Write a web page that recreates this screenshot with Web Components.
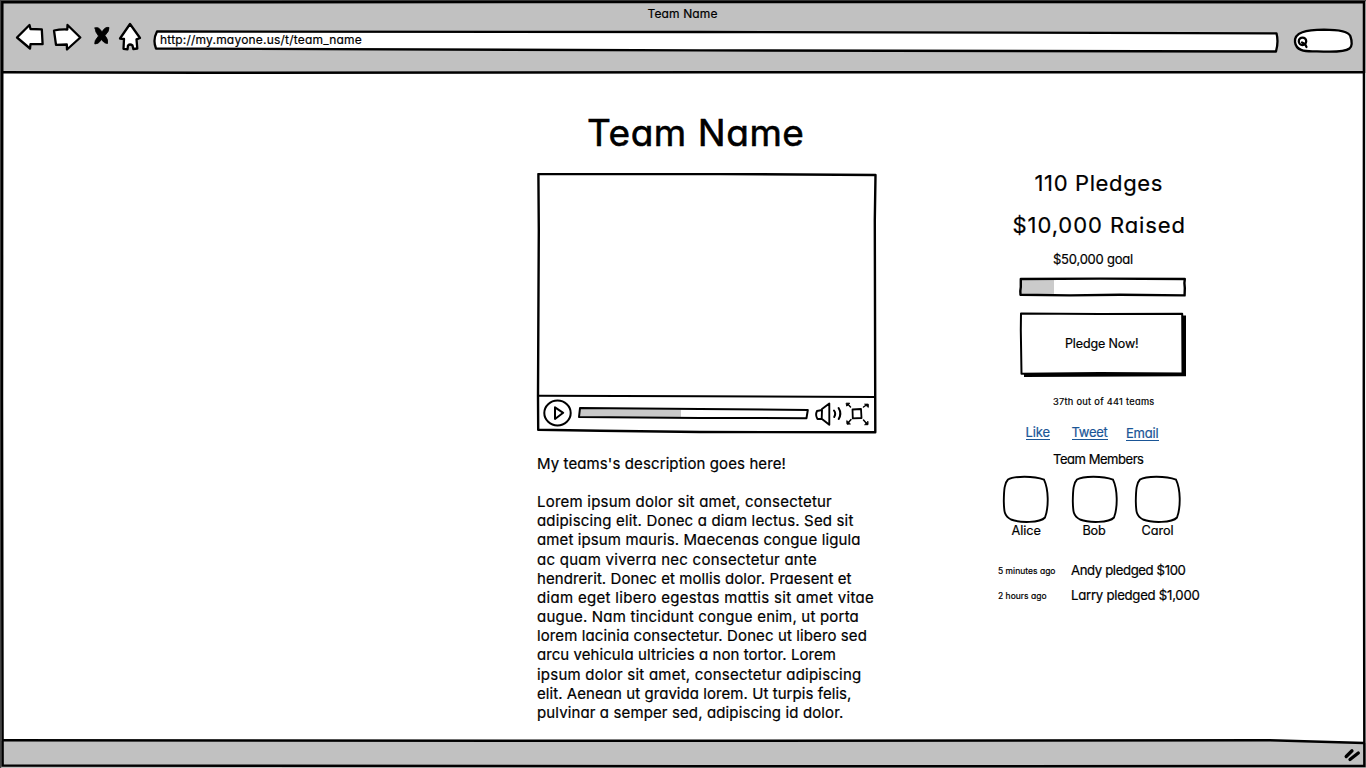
<!DOCTYPE html>
<html lang="en">
<head>
<meta charset="utf-8">
<title>Team Name</title>
<style>
html,body{margin:0;padding:0;background:#fff;overflow:hidden}
body{font-family:Inter,"Open Sans",sans-serif;color:#000}
</style>
</head>
<body>
<team-page></team-page>
<script>
const define = (name, html, ready) => {
  const t = document.createElement('template');
  t.innerHTML = html;
  customElements.define(name, class extends HTMLElement {
    constructor(){ super(); this.attachShadow({mode:'open'}).append(t.content.cloneNode(true)); }
    connectedCallback(){ if (ready) ready(this, this.shadowRoot); }
  });
};

/* One line of lettering: s = font size, w = line width, h = line box, x = indent */
define('sk-text', `<style>
:host{display:block;flex:none;white-space:pre;font-feature-settings:"cv11","calt" 0;font-weight:400;text-align:left;-webkit-text-stroke:.2px currentColor}
span{display:inline-block;line-height:inherit}
:host([u]) span{line-height:14px;border-bottom:1px solid #1a5596}
</style><span><slot></slot></span>`, (el, root) => {
  const s = +el.getAttribute('s'), w = +el.getAttribute('w'), h = el.getAttribute('h');
  el.style.fontSize = s + 'px';
  el.style.lineHeight = h + 'px';
  el.style.height = h + 'px';
  el.style.width = w + 'px';
  if (el.hasAttribute('x')) el.style.marginLeft = el.getAttribute('x') + 'px';
  const span = root.querySelector('span');
  const n = el.textContent.length;
  const k = (w - span.getBoundingClientRect().width) / n;
  span.style.letterSpacing = k.toFixed(3) + 'px';
});

define('nav-icons', `<style>:host{display:block;flex:none;width:130px;height:32px}svg{display:block}</style>
<svg width="130" height="32" viewBox="14 21 130 32" fill="#fff" stroke="#000" stroke-width="2.3" stroke-linejoin="round" stroke-linecap="round">
<path d="M17 37.5L29.5 25L30.5 29L41.8 29.4L42.6 44L30.5 44.2L30 48.5Z"/>
<path d="M54 30.5Q60 29.2 67.3 29.5L67.5 25L80.3 37.5L67 49.5L66.8 44.5L56 44.8Z"/>
<path d="M130 24L140 38L136.5 39.3L137.3 48.5L133.3 49L132.5 45.5Q130 43.5 128 45.5L127.5 49.3L123.5 48.8L124 39L120 38.5Z"/>
<path d="M95 28Q98.500 26 102 32Q105 26.500 109 27.500Q109.500 31 105 35.500Q108.500 39.500 107.500 43.500Q105 44 101.500 39.800Q98 44.500 94.800 44Q94 41 98.500 36Q95 32 95 28Z" fill="#000" stroke-width=".8"/>
</svg>`);

define('address-bar', `<style>:host{display:grid;flex:none;width:1128px;height:26px;align-items:center}
svg,sk-text{grid-area:1/1}</style>
<svg width="1128" height="26" viewBox="152 28 1128 26"><path d="M157 31.5L700 32L1276.5 33.3Q1278.7 42 1276 51.5L700 50.4L156 48.5Q152.5 40 157 31.5Z" fill="#fff" stroke="#000" stroke-width="2.3" stroke-linejoin="round"/></svg>
<sk-text s="12" w="202" h="23" x="8" style="align-self:start">http://my.mayone.us/t/team_name</sk-text>`);

define('search-pill', `<style>:host{display:block;flex:none;width:62px;height:28px}svg{display:block}</style>
<svg width="62" height="28" viewBox="1292 27 62 28" fill="#fff" stroke="#000" stroke-width="2.3" stroke-linejoin="round" stroke-linecap="round">
<path d="M1295 42C1294 32 1306 30 1324 29.7C1337 29.8 1348 31 1350.3 36C1352.5 42 1352 47 1349.5 48.5C1345 52 1330 52 1317 51.3C1303 52 1296 50 1295 42Z"/>
<circle cx="1302.5" cy="41.3" r="3.7"/><path d="M1302 42.5L1305 44L1306.500 47" stroke-width="2.2" fill="none"/></svg>`);

define('browser-bar', `<style>
:host{display:flex;flex-direction:column;height:73px;background:#c1c1c1;flex:none}
.row{display:flex;height:36px}
.row>*{align-self:flex-start}
nav-icons{margin:-6px 0 0 14px}
address-bar{margin:1px 0 0 8px}
search-pill{margin:0 0 0 12px}
</style><sk-text s="12" w="70" h="27" x="647.5">Team Name</sk-text>
<div class="row"><nav-icons></nav-icons><address-bar></address-bar><search-pill></search-pill></div>`);

define('video-player', `<style>:host{display:block;width:341px;height:261px;flex:none}svg{display:block}</style>
<svg width="341" height="261" viewBox="536 173 341 261" fill="none" stroke="#000" stroke-width="2" stroke-linejoin="round" stroke-linecap="round">
<path d="M538.4 174L720 174L875.5 175L874.8 220L875.3 432.3L700 432L600 430.8L538.2 429.8L538 396L538.5 290L538.8 230Z" stroke-width="2.4"/>
<path d="M539 395.8L700 396.2L875 397"/>
<ellipse cx="557.5" cy="413" rx="13.2" ry="12.4"/>
<path d="M555 407.3L563.2 412.8L555 419Z"/>
<path d="M580 408.5L681 409.5V417.6L579.5 417Z" fill="#c8c8c8" stroke="none"/>
<path d="M580 408L700 409L807.8 410L806.5 418.2L700 418L579 417Z"/>
<path d="M817 411L822 410L821.7 419L817.5 419Q815 415 817 411ZM822 409L829.3 403.5V424.8L822 419" stroke-width="1.9"/>
<path d="M834 410.5Q836.3 413.5 834.2 417M838.6 408Q842 413.5 838.7 419"/>
<path d="M852.5 409.5L861 409L861.5 418L852.8 418.4Z" stroke-width="1.8"/>
<path d="M850.5 407L848 404.3M863.500 407L867 404.500M851 419.5L848 423M863.5 420L867 424" stroke-width="1.5"/>
<path d="M846.500 403.200h3.200l-2.700 2.700ZM865 404.200h3.300v2.800ZM846.800 421l.2 3.200 3-.2ZM868 421.700v3h-3Z" fill="#000" stroke-width="1"/>
</svg>`);

define('team-story', `<style>:host{display:block}.gap{height:19.1px}</style>
<sk-text s="15" w="249" h="19.2">My teams's description goes here!</sk-text>
<div class="gap"></div>
<sk-text s="15" w="295" h="19.2">Lorem ipsum dolor sit amet, consectetur</sk-text>
<sk-text s="15" w="316.500" h="19.2">adipiscing elit. Donec a diam lectus. Sed sit</sk-text>
<sk-text s="15" w="323.500" h="19.2">amet ipsum mauris. Maecenas congue ligula</sk-text>
<sk-text s="15" w="280" h="19.2">ac quam viverra nec consectetur ante</sk-text>
<sk-text s="15" w="314.500" h="19.2">hendrerit. Donec et mollis dolor. Praesent et</sk-text>
<sk-text s="15" w="337" h="19.2">diam eget libero egestas mattis sit amet vitae</sk-text>
<sk-text s="15" w="322" h="19.2">augue. Nam tincidunt congue enim, ut porta</sk-text>
<sk-text s="15" w="330" h="19.2">lorem lacinia consectetur. Donec ut libero sed</sk-text>
<sk-text s="15" w="299" h="19.2">arcu vehicula ultricies a non tortor. Lorem</sk-text>
<sk-text s="15" w="324.500" h="19.2">ipsum dolor sit amet, consectetur adipiscing</sk-text>
<sk-text s="15" w="314.500" h="19.2">elit. Aenean ut gravida lorem. Ut turpis felis,</sk-text>
<sk-text s="15" w="306.500" h="19.2">pulvinar a semper sed, adipiscing id dolor.</sk-text>`);

define('goal-bar', `<style>:host{display:block;height:22px}svg{display:block}</style>
<svg width="170" height="22" viewBox="1018 276 170 22" fill="none" stroke="#000" stroke-width="2.4" stroke-linejoin="round">
<path d="M1021 279H1054V295H1021Z" fill="#cbcbcb" stroke="none"/>
<path d="M1020.8 279L1100 278.6L1184.800 279Q1184 283 1184.800 288L1184.600 295.4L1120 294.800L1070 295.4L1020.5 294.800Q1020 291 1020.800 287Z"/></svg>`);

define('pledge-button', `<style>:host{display:grid;width:170px;height:66px;align-items:center}svg,div{grid-area:1/1}svg{display:block}</style>
<svg width="170" height="66" viewBox="1018 311 170 66" stroke-linejoin="round">
<path d="M1024 373.5H1182V315.5H1186V376.3L1024 377Z" fill="#000"/>
<path d="M1021 313.5L1100 314L1182.2 313.8L1182.5 373.6L1100 373L1021.500 373.8L1020.8 330Z" fill="#fff" stroke="#000" stroke-width="2"/></svg>
<div><slot></slot></div>`);

define('member-card', `<style>:host{display:block;flex:none;width:48px}svg{display:block}</style>
<svg width="48" height="49" viewBox="0 0 48 49"><path d="M6 4.5C12 .8 32 .8 42 4.6C46.5 14 47 32 43 42.5C38 48 18 48 9 44.5C2 41 2 36 1.8 26C2 14 2.5 8 6 4.5Z" fill="#fff" stroke="#000" stroke-width="1.9"/></svg>
<slot></slot>`);

define('team-side', `<style>
:host{display:block;width:210px}
goal-bar{margin:4.400px 0 0 21px}
pledge-button{margin:13px 0 0 21px}
.links{display:flex;height:26px;color:#1a5596}
.cards{display:flex;height:65px;margin-top:2px}
.feed{display:flex;height:25px}
</style>
<sk-text s="22" w="128.500" h="40" x="37.500">110 Pledges</sk-text>
<sk-text s="22" w="173.500" h="45" x="15.500">$10,000 Raised</sk-text>
<sk-text s="13" w="80" h="23.6" x="56">$50,000 goal</sk-text>
<goal-bar></goal-bar>
<pledge-button><sk-text s="12.5" w="73.500" h="20" x="47">Pledge Now!</sk-text></pledge-button>
<div style="height:14.5px"></div>
<sk-text s="9.3" w="101.500" h="22" x="56">37th out of 441 teams</sk-text>
<div style="height:6px"></div>
<div class="links"><sk-text u s="13" w="24.500" h="26" x="28.5">Like</sk-text><sk-text u s="13" w="36" h="26" x="21.500">Tweet</sk-text><sk-text u s="13" w="32.500" h="28" x="18.5">Email</sk-text></div>
<sk-text s="13" w="90.500" h="28" x="56">Team Members</sk-text>
<div class="cards">
<member-card style="margin-left:5px"><sk-text s="12.7" w="29.500" h="14" x="9.5">Alice</sk-text></member-card>
<member-card style="margin-left:21px"><sk-text s="12.7" w="23" h="14" x="11.5">Bob</sk-text></member-card>
<member-card style="margin-left:15px"><sk-text s="12.7" w="32" h="14" x="7.5">Carol</sk-text></member-card>
</div>
<div style="height:18px"></div>
<div class="feed"><sk-text s="8.5" w="57.500" h="26" x="1">5 minutes ago</sk-text><sk-text s="13.2" w="114.500" h="25" x="15.500">Andy pledged $100</sk-text></div>
<div class="feed"><sk-text s="8.5" w="48.500" h="26" x="1">2 hours ago</sk-text><sk-text s="13.2" w="128.500" h="25" x="24.500">Larry pledged $1,000</sk-text></div>`);

define('window-frame', `<style>:host{position:absolute;inset:0;pointer-events:none}svg{display:block}</style>
<svg width="1366" height="768" viewBox="0 0 1366 768" fill="none" stroke="#000" stroke-width="2.5">
<path d="M0 0H1366V1.3H0ZM0 0H1.2V768H0Z" fill="#444" stroke="none"/>
<path d="M2.3 2.2L700 2L1364 2.2L1363.8 400L1364.4 766L700 766.3L2.6 765.5L2 400Z"/>
<path d="M2 72.2L200 72.8L700 72.2L1364 72.3M2 740.3L700 740.8L1270 740.3L1364 743"/>
<path d="M1346.2 756.500L1352 750.800M1350 759.500L1358.300 753" stroke-width="3.300" stroke-linecap="round"/>
</svg>`);

define('team-page', `<style>
:host{display:flex;flex-direction:column;position:relative;width:1366px;height:768px;background:#fff;overflow:hidden}
main{display:grid;grid-template-columns:341px 210px;column-gap:120px;height:668px;flex:none;padding-left:536px;box-sizing:border-box}
footer{flex:1;background:#c1c1c1;clip-path:polygon(0 0,1270px 0,100% 2px,100% 100%,0 100%)}
.centre{padding-top:35px}
.title{-webkit-text-stroke:.6px #000}
team-story{margin:19.7px 0 0 1px}
team-side{padding-top:90px}
</style>
<browser-bar></browser-bar>
<main><div class="centre"><sk-text class="title" s="37" w="217.500" h="50" x="51">Team Name</sk-text>
<div style="height:15px"></div><video-player></video-player><team-story></team-story></div>
<team-side></team-side></main>
<footer></footer>
<window-frame></window-frame>`);
</script>
</body>
</html>
